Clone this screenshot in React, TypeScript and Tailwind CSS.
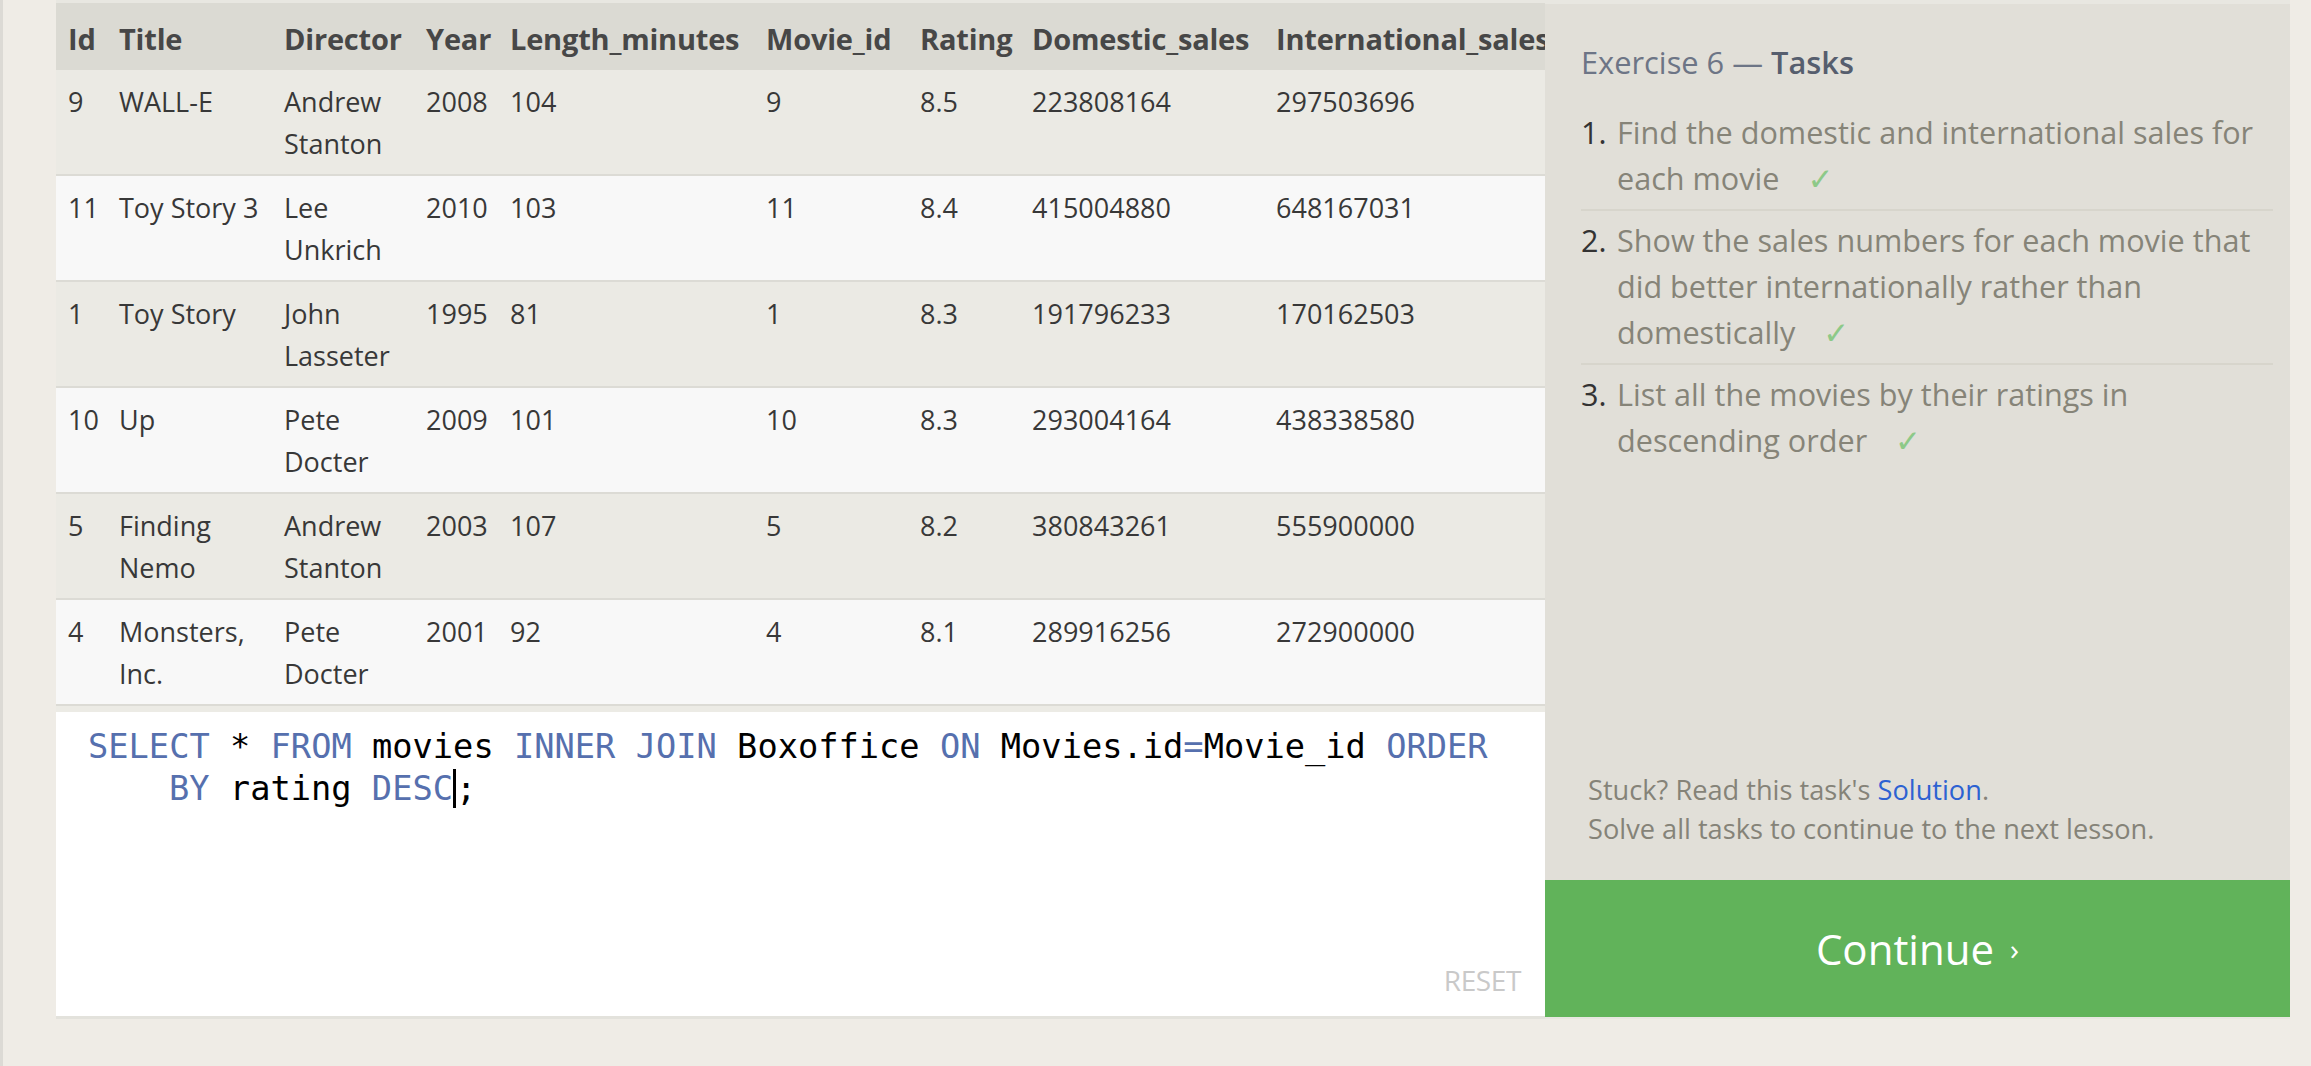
import React from 'react';

type Row = {
  id: string;
  title: string[];
  director: string[];
  year: string;
  length: string;
  movieId: string;
  rating: string;
  domestic: string;
  international: string;
};

const ROWS: Row[] = [
  { id: '9', title: ['WALL-E'], director: ['Andrew', 'Stanton'], year: '2008', length: '104', movieId: '9', rating: '8.5', domestic: '223808164', international: '297503696' },
  { id: '11', title: ['Toy Story 3'], director: ['Lee', 'Unkrich'], year: '2010', length: '103', movieId: '11', rating: '8.4', domestic: '415004880', international: '648167031' },
  { id: '1', title: ['Toy Story'], director: ['John', 'Lasseter'], year: '1995', length: '81', movieId: '1', rating: '8.3', domestic: '191796233', international: '170162503' },
  { id: '10', title: ['Up'], director: ['Pete', 'Docter'], year: '2009', length: '101', movieId: '10', rating: '8.3', domestic: '293004164', international: '438338580' },
  { id: '5', title: ['Finding', 'Nemo'], director: ['Andrew', 'Stanton'], year: '2003', length: '107', movieId: '5', rating: '8.2', domestic: '380843261', international: '555900000' },
  { id: '4', title: ['Monsters,', 'Inc.'], director: ['Pete', 'Docter'], year: '2001', length: '92', movieId: '4', rating: '8.1', domestic: '289916256', international: '272900000' },
];

const HEADERS = ['Id', 'Title', 'Director', 'Year', 'Length_minutes', 'Movie_id', 'Rating', 'Domestic_sales', 'International_sales'];

function Lines({ lines }: { lines: string[] }) {
  return (
    <>
      {lines.map((l, i) => (
        <div key={i} className="whitespace-nowrap">{l}</div>
      ))}
    </>
  );
}

function Check() {
  return <span className="ml-[20px] text-[#8dc988] font-['DejaVu_Sans',sans-serif] text-[31px]">✓</span>;
}

export default function App() {
  const cell = 'align-top pl-[12px] pr-[2px] pt-[11px] pb-[9px] text-left';
  return (
    <div className="w-[2311px] h-[1066px] bg-[#efece6] flex overflow-hidden font-['Open_Sans','Liberation_Sans',sans-serif]">
      <div className="w-[3px] bg-[#dcdad5] shrink-0" />
      <div className="w-[53px] shrink-0" />

      <div className="flex flex-col">
        <div className="flex bg-[#e8e7e1] pt-[3px]">
          {/* Left: results + editor */}
          <div className="w-[1489px] flex flex-col bg-[#ecebe5]">
            <div className="h-[703px] overflow-hidden">
              <table className="table-fixed border-collapse w-[1528px] text-[27px] leading-[42px] text-[#383838]">
                <colgroup>
                  <col className="w-[51px]" />
                  <col className="w-[165px]" />
                  <col className="w-[142px]" />
                  <col className="w-[84px]" />
                  <col className="w-[256px]" />
                  <col className="w-[154px]" />
                  <col className="w-[112px]" />
                  <col className="w-[244px]" />
                  <col className="w-[320px]" />
                </colgroup>
                <thead>
                  <tr className="bg-[#dbdad3]">
                    {HEADERS.map((h) => (
                      <th key={h} className="pl-[12px] pr-[2px] pt-[15px] pb-[10px] text-left text-[29px] font-bold text-[#474747] whitespace-nowrap tracking-[-0.2px]">
                        {h}
                      </th>
                    ))}
                  </tr>
                </thead>
                <tbody>
                  {ROWS.map((r, i) => (
                    <tr key={r.id} className={`border-b-2 border-[#dcdbd5] ${i % 2 === 0 ? 'bg-[#ebeae4]' : 'bg-[#f8f8f8]'}`}>
                      <td className={cell}>{r.id}</td>
                      <td className={cell}><Lines lines={r.title} /></td>
                      <td className={cell}><Lines lines={r.director} /></td>
                      <td className={cell}>{r.year}</td>
                      <td className={cell}>{r.length}</td>
                      <td className={cell}>{r.movieId}</td>
                      <td className={cell}>{r.rating}</td>
                      <td className={cell}>{r.domestic}</td>
                      <td className={cell}>{r.international}</td>
                    </tr>
                  ))}
                </tbody>
              </table>
            </div>

            <div className="h-[6px]" />

            {/* Editor */}
            <div className="h-[304px] bg-white flex flex-col justify-between border-b-[3px] border-[#e3e2dc] box-content">
              <div className="pt-[14px] pl-[32px] font-['DejaVu_Sans_Mono',monospace] text-[33.7px] leading-[42px] text-black">
                <div className="whitespace-pre">
                  <span className="text-[#5670ae]">SELECT</span> * <span className="text-[#5670ae]">FROM</span> movies <span className="text-[#5670ae]">INNER</span> <span className="text-[#5670ae]">JOIN</span> Boxoffice <span className="text-[#5670ae]">ON</span> Movies.id<span className="text-[#5670ae]">=</span>Movie_id <span className="text-[#5670ae]">ORDER</span>
                </div>
                <div className="whitespace-pre pl-[81px]">
                  <span className="text-[#5670ae]">BY</span> rating <span className="text-[#5670ae]">DESC</span><span className="border-l-[3px] border-black" />;
                </div>
              </div>
              <div className="self-end pr-[24px] pb-[22px] text-[28px] leading-[28px] tracking-[-0.4px] text-[#c9c9c9]">RESET</div>
            </div>
          </div>

          {/* Right: tasks panel */}
          <div className="w-[745px] mt-[1px] h-[1013px] bg-[#e1dfd8] flex flex-col">
            <div className="pt-[33px] pl-[36px] pr-[17px]">
              <h2 className="text-[30.8px] leading-[51px] text-[#6d7586]">
                Exercise 6 — <span className="font-semibold text-[#565e6e]">Tasks</span>
              </h2>
              <ol className="mt-[21px] text-[30.6px] leading-[46px] text-[#868478]">
                <li className="flex pb-[7px] border-b-2 border-[#d7d5cc]">
                  <span className="w-[36px] shrink-0 text-[#333]">1.</span>
                  <span className="whitespace-nowrap">Find the domestic and international sales for<br />each movie <Check /></span>
                </li>
                <li className="flex pt-[6px] pb-[7px] border-b-2 border-[#d7d5cc]">
                  <span className="w-[36px] shrink-0 text-[#333]">2.</span>
                  <span className="whitespace-nowrap">Show the sales numbers for each movie that<br />did better internationally rather than<br />domestically <Check /></span>
                </li>
                <li className="flex pt-[6px]">
                  <span className="w-[36px] shrink-0 text-[#333]">3.</span>
                  <span className="whitespace-nowrap">List all the movies by their ratings in<br />descending order <Check /></span>
                </li>
              </ol>
            </div>
            <div className="flex-1" />
            <div className="pl-[43px] pb-[32px] text-[27.2px] leading-[39px] text-[#858378]">
              <div>Stuck? Read this task's <span className="text-[#2d62d2]">Solution</span>.</div>
              <div>Solve all tasks to continue to the next lesson.</div>
            </div>
            <button className="h-[137px] w-full bg-[#61b35a] text-white text-[42px] flex items-center justify-center">
              Continue <span className="ml-[16px] text-[30px]">›</span>
            </button>
          </div>
        </div>
      </div>
    </div>
  );
}
